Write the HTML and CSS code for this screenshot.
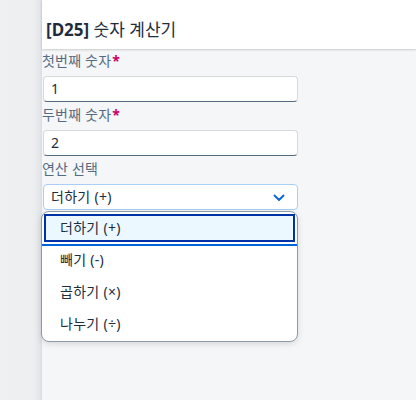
FILE: index.html
```html
<!DOCTYPE html>
<html lang="ko">
<head>
<meta charset="utf-8">
<link rel="stylesheet" href="styles.css">
</head>
<body>
<div class="app">
  <aside class="side"></aside>
  <main class="main">
    <header class="header"><h1 class="title"><b>[D25]</b> 숫자 계산기</h1></header>
    <form class="form">
      <label class="label">첫번째 숫자<span class="req">*</span></label>
      <div class="input">1</div>
      <label class="label">두번째 숫자<span class="req">*</span></label>
      <div class="input">2</div>
      <label class="label">연산 선택</label>
      <div class="select-wrap">
        <div class="select">
          <span>더하기 (+)</span>
          <svg class="chev" width="12" height="8" viewBox="0 0 12 8"><path d="M1.5 1.5 L6 6 L10.5 1.5" fill="none" stroke="#0064d9" stroke-width="1.8" stroke-linecap="round" stroke-linejoin="round"/></svg>
        </div>
        <ul class="popover">
          <li class="item selected"><span class="focus">더하기 (+)</span></li>
          <li class="item">빼기 (-)</li>
          <li class="item">곱하기 (×)</li>
          <li class="item">나누기 (÷)</li>
        </ul>
      </div>
    </form>
  </main>
</div>
</body>
</html>
```
FILE: styles.css
```css
html, body { margin: 0; padding: 0; }
body {
  font-family: "Noto Sans", "Noto Sans CJK KR", sans-serif;
  color: #1d2d3e;
  background: #f5f6f7;
  width: 416px;
  height: 400px;
  overflow: hidden;
}
.app { display: flex; height: 400px; }
.side {
  width: 42px;
  flex: none;
  background: linear-gradient(to right, #eef0f2 0, #eceef0 34px, #e2e5e8 40px, #d9dce0 42px);
}
.main { flex: 1; background: #f5f6f7; }
.header {
  height: 49px;
  background: #fff;
  box-shadow: 0 1px 2px rgba(0,0,0,0.18);
  position: relative;
  z-index: 1;
}
.title {
  margin: 0;
  padding: 20px 0 0 4px;
  font-size: 17px;
  line-height: 20px;
  font-weight: normal;
  color: #1d2d3e;
}
.title b { font-weight: 700; }
.form {
  display: flex;
  flex-direction: column;
  width: 256px;
  padding-top: 1px;
}
.label {
  font-size: 14px;
  line-height: 22px;
  color: #556b82;
  margin: 2px 0 4px;
  letter-spacing: 0.2px;
}
.label:first-child { margin-top: 0; }
.req { color: #c5006b; font-weight: 700; margin-left: 1px; }
.input {
  box-sizing: border-box;
  height: 26px;
  margin-left: 1px;
  background: #fff;
  border: 1px solid #d5dadd;
  border-bottom-color: #556b81;
  border-radius: 4px;
  padding: 0 7px;
  font-size: 14px;
  line-height: 24px;
  color: #1d2d3e;
}
.select-wrap { position: relative; }
.select {
  box-sizing: border-box;
  height: 26px;
  margin-left: 1px;
  background: #fff;
  border: 1px solid #a9cff5;
  border-radius: 4px;
  padding: 0 12px 0 7px;
  font-size: 14px;
  line-height: 24px;
  letter-spacing: 0.3px;
  display: flex;
  align-items: center;
  justify-content: space-between;
}
.chev { display: block; margin-top: 1px; }
.popover {
  position: absolute;
  left: -1px;
  top: 27px;
  width: 257px;
  box-sizing: border-box;
  margin: 0;
  padding: 0;
  list-style: none;
  background: #fff;
  border: 1px solid #8c9aa8;
  border-radius: 8px;
  box-shadow: 0 2px 6px rgba(0,0,0,0.12);
  overflow: hidden;
}
.item {
  height: 32px;
  box-sizing: border-box;
  padding-left: 18px;
  font-size: 14px;
  line-height: 32px;
  letter-spacing: 0.3px;
  color: #1d2d3e;
}
.item.selected {
  padding: 2px 2px 0 2px;
  border-bottom: 2px solid #0064d9;
  height: 34px;
}
.focus {
  display: block;
  height: 28px;
  box-sizing: border-box;
  background: #ebf8ff;
  border: 2px solid #0032a5;
  padding-left: 14px;
  line-height: 24px;
}
.item.selected + .item { height: 30px; line-height: 28px; }
.item:last-child { height: 33px; }
```
